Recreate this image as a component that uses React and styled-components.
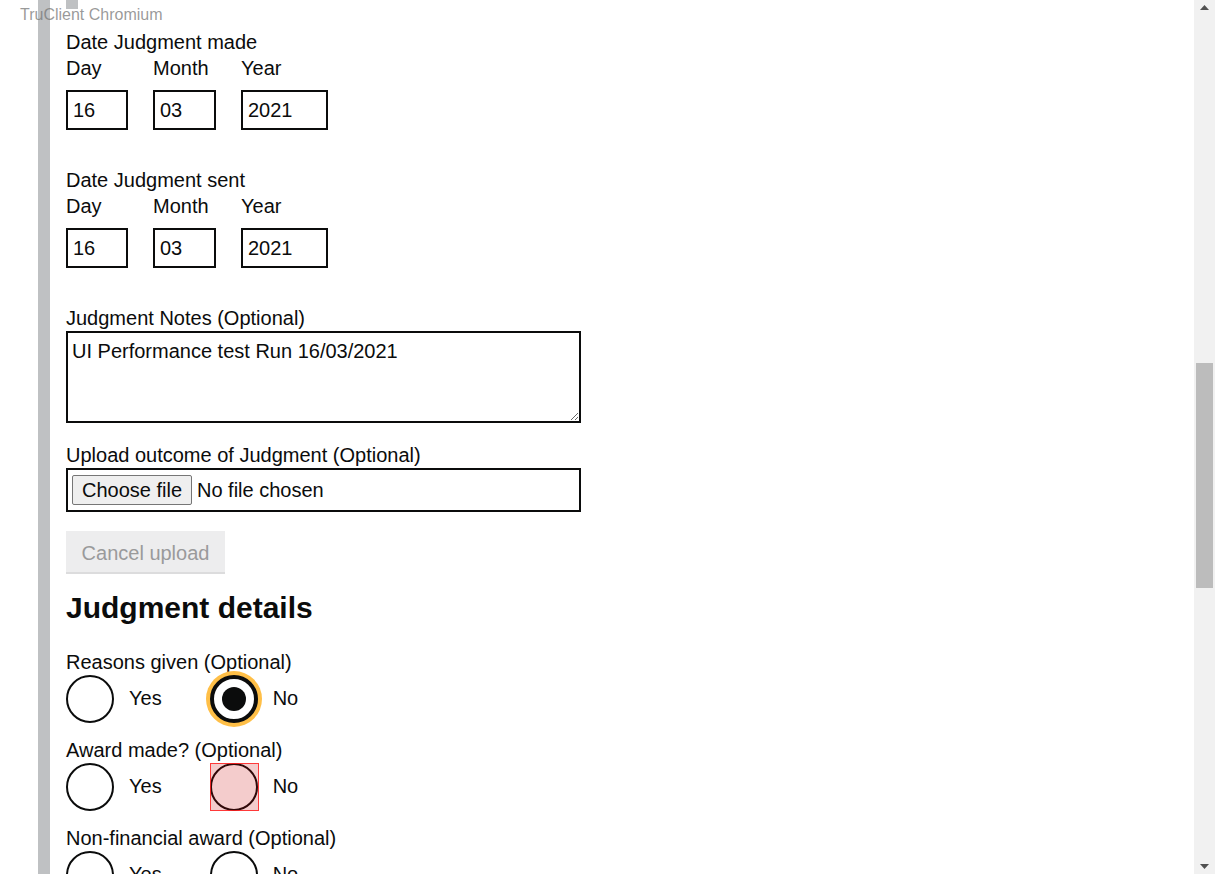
import React from "react";
import styled, { createGlobalStyle } from "styled-components";

const GlobalStyle = createGlobalStyle`
  html, body {
    margin: 0;
    padding: 0;
    height: 874px;
    overflow: hidden;
    background: #ffffff;
  }
  body {
    font-family: "Liberation Sans", Arial, sans-serif;
    color: #0b0c0c;
  }
`;

const Page = styled.div`
  display: flex;
  width: 1215px;
  height: 874px;
`;

const Viewport = styled.div`
  position: relative;
  flex: 1;
  overflow: hidden;
`;

const Inset = styled.div`
  margin-left: 38px;
  border-left: 12px solid #bfc1c3;
  padding-left: 16px;
  height: 100%;
`;

const Watermark = styled.div`
  position: absolute;
  top: 6px;
  left: 20px;
  font-size: 16px;
  line-height: 18px;
  color: rgba(120, 120, 120, 0.75);
  pointer-events: none;
`;

const TopNub = styled.div`
  width: 12px;
  height: 9px;
  background: #bfc1c3;
`;

const Group = styled.div`
  margin-top: ${(p) => p.$gap}px;
`;

const Legend = styled.div`
  font-size: 20px;
  line-height: 26px;
`;

const DateRow = styled.div`
  display: flex;
  gap: 25px;
`;

const DateItem = styled.div`
  display: flex;
  flex-direction: column;
`;

const SmallLabel = styled.div`
  font-size: 20px;
  line-height: 26px;
  margin-bottom: 9px;
`;

const DateInput = styled.input`
  box-sizing: border-box;
  width: ${(p) => p.$w}px;
  height: 40px;
  border: 2px solid #0b0c0c;
  border-radius: 0;
  padding: 0 5px;
  font-family: inherit;
  font-size: 20px;
  color: #0b0c0c;
  outline: none;
`;

const NotesArea = styled.textarea`
  display: block;
  box-sizing: border-box;
  width: 515px;
  height: 92px;
  border: 2px solid #0b0c0c;
  border-radius: 0;
  padding: 6px 4px;
  margin: 0;
  font-family: inherit;
  font-size: 20px;
  line-height: 25px;
  color: #0b0c0c;
  outline: none;
`;

const FileBox = styled.div`
  box-sizing: border-box;
  width: 515px;
  height: 44px;
  border: 2px solid #0b0c0c;
  display: flex;
  align-items: center;
  padding-left: 4px;
  gap: 5px;
  font-size: 20px;
`;

const ChooseButton = styled.button`
  box-sizing: border-box;
  width: 120px;
  height: 30px;
  background: #efefef;
  border: 1px solid #767676;
  border-radius: 2px;
  padding: 0;
  font-family: inherit;
  font-size: 20px;
  color: #0b0c0c;
`;

const CancelButton = styled.button`
  display: block;
  box-sizing: border-box;
  width: 159px;
  height: 41px;
  margin-top: 19px;
  border: 0;
  background: #ededee;
  box-shadow: 0 2px 0 #dcdcdd;
  font-family: inherit;
  font-size: 20px;
  color: #9a9a9b;
  padding: 3px 0 0;
`;

const Heading = styled.h2`
  margin: 18px 0 0;
  font-size: 30px;
  line-height: 35px;
  font-weight: 700;
`;

const RadioRow = styled.div`
  display: flex;
  height: 48px;
`;

const RadioItem = styled.div`
  position: relative;
  display: flex;
  align-items: center;
  margin-right: 33px;
`;

const Circle = styled.div`
  box-sizing: border-box;
  width: 48px;
  height: 48px;
  border-radius: 50%;
  border: ${(p) => (p.$checked ? 4 : 2)}px solid #0b0c0c;
  background: #ffffff;
  display: flex;
  align-items: center;
  justify-content: center;
  box-shadow: ${(p) => (p.$focus ? "0 0 0 4px #ffbf47" : "none")};
`;

const Dot = styled.div`
  width: 24px;
  height: 24px;
  border-radius: 50%;
  background: #0b0c0c;
`;

const RadioText = styled.span`
  font-size: 20px;
  line-height: 24px;
  padding: 0 15px 2px 15px;
`;

const Highlight = styled.div`
  position: absolute;
  left: 0;
  top: 0;
  box-sizing: border-box;
  width: 49px;
  height: 48px;
  border: 1px solid rgba(255, 30, 30, 0.85);
  background: rgba(200, 0, 0, 0.2);
`;

const Scrollbar = styled.div`
  width: 21px;
  height: 874px;
  background: #f1f1f1;
  display: flex;
  flex-direction: column;
  align-items: center;
`;

const Arrow = styled.div`
  height: 15px;
  display: flex;
  align-items: center;
  justify-content: center;
`;

const Track = styled.div`
  flex: 1;
  width: 100%;
  display: flex;
  flex-direction: column;
  align-items: center;
`;

const Thumb = styled.div`
  margin-top: 348px;
  width: 17px;
  height: 225px;
  background: #bcbcbc;
`;

function DateGroup({ title, gap }) {
  return (
    <Group $gap={gap}>
      <Legend>{title}</Legend>
      <DateRow>
        <DateItem>
          <SmallLabel>Day</SmallLabel>
          <DateInput $w={62} defaultValue="16" />
        </DateItem>
        <DateItem>
          <SmallLabel>Month</SmallLabel>
          <DateInput $w={63} defaultValue="03" />
        </DateItem>
        <DateItem>
          <SmallLabel>Year</SmallLabel>
          <DateInput $w={87} defaultValue="2021" />
        </DateItem>
      </DateRow>
    </Group>
  );
}

function RadioGroup({ title, gap, checkedNo, highlightNo }) {
  return (
    <Group $gap={gap}>
      <Legend>{title}</Legend>
      <RadioRow>
        <RadioItem>
          <Circle />
          <RadioText>Yes</RadioText>
        </RadioItem>
        <RadioItem>
          <Circle $checked={checkedNo} $focus={checkedNo}>
            {checkedNo && <Dot />}
          </Circle>
          <RadioText>No</RadioText>
          {highlightNo && <Highlight />}
        </RadioItem>
      </RadioRow>
    </Group>
  );
}

export default function App() {
  return (
    <Page>
      <GlobalStyle />
      <Viewport>
        <Inset>
          <TopNub />
          <DateGroup title="Date Judgment made" gap={20} />
          <DateGroup title="Date Judgment sent" gap={37} />

          <Group $gap={37}>
            <Legend>Judgment Notes (Optional)</Legend>
            <NotesArea defaultValue="UI Performance test Run 16/03/2021" />
          </Group>

          <Group $gap={19}>
            <Legend>Upload outcome of Judgment (Optional)</Legend>
            <FileBox>
              <ChooseButton>Choose file</ChooseButton>
              <span>No file chosen</span>
            </FileBox>
          </Group>

          <CancelButton disabled>Cancel upload</CancelButton>

          <Heading>Judgment details</Heading>

          <RadioGroup title="Reasons given (Optional)" gap={24} checkedNo />
          <RadioGroup title="Award made? (Optional)" gap={14} highlightNo />
          <RadioGroup title="Non-financial award (Optional)" gap={14} />
        </Inset>
        <Watermark>TruClient Chromium</Watermark>
      </Viewport>
      <Scrollbar>
        <Arrow>
          <svg width="9" height="5" viewBox="0 0 9 5">
            <path d="M0 5 L4.5 0 L9 5 Z" fill="#505050" />
          </svg>
        </Arrow>
        <Track>
          <Thumb />
        </Track>
        <Arrow>
          <svg width="9" height="5" viewBox="0 0 9 5">
            <path d="M0 0 L4.5 5 L9 0 Z" fill="#505050" />
          </svg>
        </Arrow>
      </Scrollbar>
    </Page>
  );
}
